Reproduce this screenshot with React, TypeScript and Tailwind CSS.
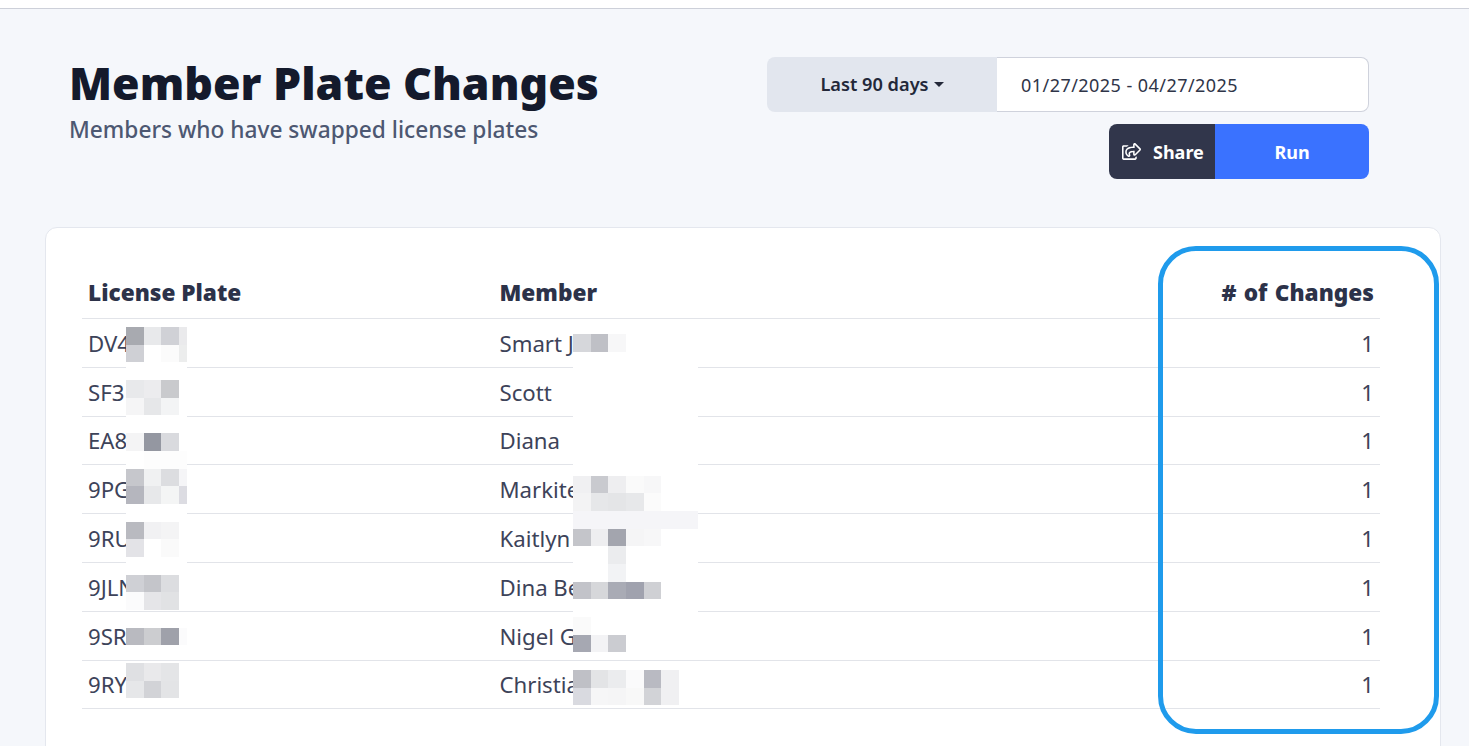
import React from "react";
import { FaRegShareSquare } from "react-icons/fa";

const rows = [
  { plate: "DV4", member: "Smart J" },
  { plate: "SF3", member: "Scott" },
  { plate: "EA8", member: "Diana" },
  { plate: "9PG", member: "Markite" },
  { plate: "9RU", member: "Kaitlyn" },
  { plate: "9JLN", member: "Dina Be" },
  { plate: "9SR", member: "Nigel G" },
  { plate: "9RY", member: "Christian" },
];

// pixelated cells that hide the private part of each row, "" = see through
const plateCells = [
  ["#a8aab0", "#e8e9eb", "#d0d1d6", "#eaeaec"],
  ["#cfd0d5", "#fff", "#fbfbfb", "#eceded"],
  ["#fff", "#fff", "#fff", "#fff"],
  ["#e8e9eb", "#ececee", "#c9cacd", "#fff"],
  ["#f5f5f6", "#e6e7e9", "#f3f4f5", "#fff"],
  ["#fff", "#fff", "#fff", "#fff"],
  ["#f4f4f5", "#9497a1", "#d9dade", "#fff"],
  ["#fff", "#fdfdfd", "#fdfdfd", "#fdfdfd"],
  ["#c6c7cc", "#f0f1f2", "#dcdde0", "#f5f5f7"],
  ["#b5b6be", "#e7e8ea", "#f4f5f5", "#dcdce2"],
  ["#fff", "#fff", "#fff", "#fff"],
  ["#b9bac0", "#f1f1f3", "#f4f4f5", "#fff"],
  ["#e3e3e7", "#fff", "#fafafa", "#fff"],
  ["#fff", "#fff", "#fff", "#fff"],
  ["#cfd0d5", "#c4c5ca", "#dcdde0", "#fff"],
  ["#fbfbfc", "#e5e5e8", "#e1e2e4", "#fff"],
  ["", "", "", ""],
  ["#b9bac0", "#cccdd0", "#9fa1aa", "#fbfbfc"],
  ["", "", "", ""],
  ["#dfe0e3", "#e9e9eb", "#e4e5e7", "#fff"],
  ["#e6e7e9", "#d2d3d7", "#e3e4e6", "#fff"],
];

const memberCells = [
  ["#d6d7db", "#bfc0c6", "#f7f7f8", "#fff", "#fff", "#fff", "#fff"],
  ["#fff", "#fff", "#fff", "#fff", "#fff", "#fff", "#fff"],
  ["#fff", "#fff", "#fff", "#fff", "#fff", "#fff", "#fff"],
  ["#fff", "#fff", "#fff", "#fff", "#fff", "#fff", "#fff"],
  ["#fff", "#fff", "#fff", "#fff", "#fff", "#fff", "#fff"],
  ["#fff", "#fff", "#fff", "#fff", "#fff", "#fff", "#fff"],
  ["#fff", "#fff", "#fff", "#fff", "#fff", "#fff", "#fff"],
  ["#fff", "#fff", "#fff", "#fff", "#fff", "#fff", "#fff"],
  ["#f0f0f2", "#c9cacf", "#eeeef0", "#fafafa", "#f7f7f8", "#fff", "#fff"],
  ["#f3f3f4", "#e6e7e9", "#e4e5e7", "#e7e8ea", "#fbfbfb", "#fff", "#fff"],
  ["#f5f5f8", "#f5f5f8", "#f5f5f8", "#f5f5f8", "#f5f5f8", "#f5f5f8", "#f5f5f8"],
  ["#c4c5ca", "#eeeef0", "#a3a5ae", "#f5f5f6", "#f7f7f8", "#fff", "#fff"],
  ["#fff", "#fff", "#ebecee", "#fff", "#fff", "#fff", "#fff"],
  ["#fff", "#fff", "#f2f3f5", "#fff", "#fff", "#fff", "#fff"],
  ["#c2c3c9", "#d6d7da", "#a9abb5", "#a0a2ae", "#cfd0d4", "#fff", "#fff"],
  ["#fff", "#fff", "#fff", "#fff", "#fff", "#fff", "#fff"],
  ["#fafafa", "#fff", "#fff", "#fff", "#fff", "#fff", "#fff"],
  ["#a6a8b2", "#f3f3f5", "#cbccd1", "#fff", "#fff", "#fff", "#fff"],
  ["", "", "", "", "", "", ""],
  ["#bfc0c6", "#e3e4e6", "#ebecee", "#fafafb", "#b9bac2", "#f0f0f2", ""],
  ["#d9dae0", "#f6f6f7", "#f5f5f6", "#f8f8f8", "#d2d3d7", "#f0f0f2", ""],
];

function Mosaic({ cells, className }: { cells: string[][]; className: string }) {
  return (
    <div className={`absolute flex flex-col ${className}`}>
      {cells.map((row, r) => (
        <div key={r} className="flex h-[17.7px]">
          {row.map((color, c) => (
            <div key={c} className="h-full w-[17.7px] shrink-0 last:w-[19px]" style={{ backgroundColor: color || "transparent" }} />
          ))}
        </div>
      ))}
    </div>
  );
}

export default function App() {
  return (
    <div className="relative h-[746px] overflow-hidden bg-[#f5f7fb] font-['Noto_Sans',sans-serif] text-[#2c3249]">
      <div className="h-[9px] border-b border-[#cdd0d9] bg-white" />

      <div className="flex justify-between pl-[69px] pr-[100px] pt-[48px]">
        <div>
          <h1 className="text-[44.6px] font-black leading-[52px] text-[#141a2c]">Member Plate Changes</h1>
          <p className="mt-[7px] text-[22.7px] font-medium leading-[28px] text-[#4d5872]">Members who have swapped license plates</p>
        </div>
        <div className="flex w-[602px] flex-col items-end gap-3">
          <div className="flex h-[55px] w-full">
            <button className="flex w-[230px] items-center justify-center gap-[5px] rounded-l-lg bg-[#e2e6ee] pt-[1px] text-[18.2px] font-semibold text-[#232839]">
              Last 90 days
              <span className="mb-[2px] border-x-[5px] border-t-[5px] border-x-transparent border-t-[#232839]" />
            </button>
            <div className="flex flex-1 items-center rounded-r-lg border border-l-0 border-[#cfd2dc] bg-white pl-[24px] text-lg tracking-[0.45px] text-[#2f3548]">
              01/27/2025 - 04/27/2025
            </div>
          </div>
          <div className="flex h-[55px] w-[260px] text-lg font-bold text-white">
            <button className="flex w-[106px] items-center gap-[12px] rounded-l-lg bg-[#31364b] pl-[13px]">
              <FaRegShareSquare className="text-[19px]" />
              Share
            </button>
            <button className="flex-1 rounded-r-lg bg-[#3a72ff]">Run</button>
          </div>
        </div>
      </div>

      <div className="ml-[45px] mt-[48px] h-[600px] w-[1396px] rounded-xl border border-[#e4e7ee] bg-white pl-[36px] pr-[60px] pt-[40px]">
        <div className="flex h-[51px] items-center border-b border-[#e2e4e9] px-[6px] text-[22.6px] font-black">
          <div className="w-[411.5px]">License Plate</div>
          <div className="flex-1">Member</div>
          <div className="[word-spacing:1.5px]"># of Changes</div>
        </div>
        {rows.map((row) => (
          <div key={row.plate} className="flex h-[48.8px] items-center border-b border-[#e2e4e9] px-[6px] pt-[1px] text-[22.2px] text-[#3d4359]">
            <div className="w-[411.5px]">{row.plate}</div>
            <div className="flex-1">{row.member}</div>
            <div>1</div>
          </div>
        ))}
      </div>

      <Mosaic cells={plateCells} className="left-[126px] top-[327px] w-[61px] overflow-hidden" />
      <Mosaic cells={memberCells} className="left-[573px] top-[334px] w-[125px] overflow-hidden" />

      <div className="absolute left-[1158px] top-[246px] h-[488px] w-[281px] rounded-[38px] border-[5px] border-[#1f9bec]" />
    </div>
  );
}
